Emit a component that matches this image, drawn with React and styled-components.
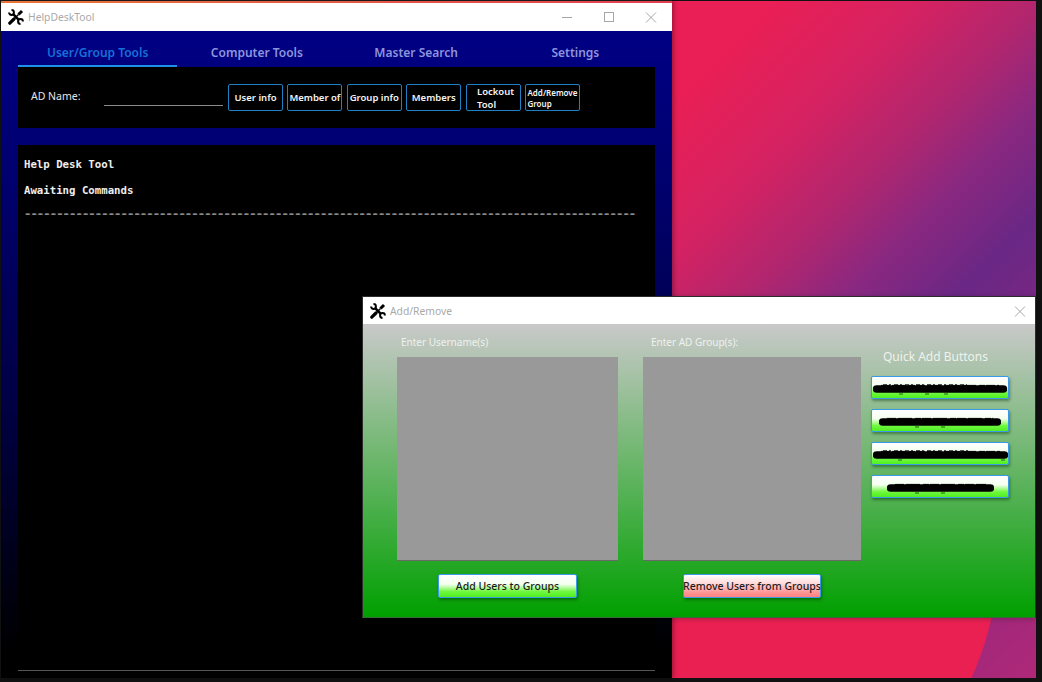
import React from "react";
import styled, { createGlobalStyle } from "styled-components";

const Global = createGlobalStyle`
  html, body { margin: 0; padding: 0; background: #111; overflow: hidden; }
  * { box-sizing: border-box; }
`;
const UI = `"Noto Sans", "Open Sans", sans-serif`;

const Screen = styled.div`
  position: relative;
  width: 1042px;
  height: 682px;
  background: #111;
  overflow: hidden;
  font-family: ${UI};
`;
const Wallpaper = styled.div`
  position: absolute;
  left: 1px; top: 1px;
  width: 1035px;
  height: 677px;
  background:
    radial-gradient(circle 300px at 698px 206px, #ea2052 0 99.5%, rgba(234,32,82,0) 100%) 0 100% / 100% 330px no-repeat,
    linear-gradient(135deg, #ea1f55 0%, #ea1f55 45%, #d52262 54%, #b0266f 61%, #8a2880 66.5%, #6a2785 73%, #b02878 100%);
`;
const Win = styled.div`
  position: absolute;
  display: flex;
  flex-direction: column;
`;
const MainWin = styled(Win)`
  left: 1px; top: 0; width: 671px; height: 678px;
  box-shadow: 2px 0 4px rgba(0,0,0,.3);
`;
const AccentStrip = styled.div`
  height: 3px;
  background: linear-gradient(90deg, #e8743a, #e04050);
  border-top: 1px solid #1a1a1a;
`;
const TitleBar = styled.div`
  display: flex;
  align-items: center;
  height: ${p => p.$h}px;
  background: #fff;
  flex: none;
  padding-left: 7px;
`;
const TitleText = styled.span`
  margin-left: 4px;
  font-size: 10.3px;
  color: #a9a9a9;
`;
const Controls = styled.div`
  margin-left: auto;
  display: flex;
  align-items: center;
`;
const Ctl = styled.svg`
  width: 42px;
  height: 12px;
  display: block;
  stroke: #a6a6a6;
  stroke-width: 1;
  fill: none;
  flex: none;
`;
const Icon = styled.svg`
  width: 16px;
  height: 16px;
  display: block;
  flex: none;
  fill: none;
  stroke: #000;
`;
const MainBody = styled.div`
  flex: 1;
  display: flex;
  flex-direction: column;
  padding: 7px 17px 7px 17px;
  background: linear-gradient(180deg, #000084 0%, #00006c 25%, #000040 60%, #000 96%);
`;
const Tabs = styled.div`
  display: flex;
  height: 29px;
  flex: none;
`;
const Tab = styled.div`
  flex: 1;
  display: flex;
  align-items: center;
  justify-content: center;
  padding-top: 1px;
  font-size: 12px;
  font-weight: 600;
  color: ${p => (p.$active ? "#1670d8" : "#8e94dc")};
  border-bottom: 2px solid ${p => (p.$active ? "#1e90e8" : "transparent")};
`;
const Toolbar = styled.div`
  height: 61px;
  flex: none;
  background: #000;
  display: flex;
  align-items: flex-start;
  padding: 17px 0 0 13px;
`;
const AdLabel = styled.span`
  width: 73px;
  margin-top: 5px;
  font-size: 10.5px;
  color: #e6e6e6;
  flex: none;
`;
const AdInput = styled.div`
  width: 119px;
  height: 22px;
  border-bottom: 1px solid #8a8a8a;
  margin-right: 5px;
  flex: none;
`;
const Tools = styled.div`
  display: flex;
  gap: 4.4px;
`;
const ToolBtn = styled.div`
  width: 55px;
  height: 27px;
  border: 1px solid #2080c4;
  border-radius: 2px;
  display: flex;
  align-items: center;
  justify-content: center;
  color: #f4f4f4;
  font-size: 9.5px;
  font-weight: 600;
  line-height: 13px;
  white-space: nowrap;
`;
const Stack = styled.div`
  display: flex;
  flex-direction: column;
  font-size: ${p => p.$fs || 9.5}px;
  line-height: ${p => p.$lh || 13}px;
`;
const Output = styled.div`
  margin-top: 17px;
  flex: 1;
  background: #000;
  border-bottom: 1px solid #555;
  padding: 13px 6px;
  font-family: "DejaVu Sans Mono", monospace;
  font-weight: 700;
  font-size: 10.7px;
  line-height: 13px;
  color: #eee;
`;
const OutLine = styled.div`
  margin-bottom: 12.5px;
  white-space: pre;
`;
const Dashes = styled(OutLine)`
  margin-top: -2.5px;
  color: #8a8a8a;
  text-shadow: 1px 0 0 #7a7a7a;
`;
const DialogWin = styled(Win)`
  left: 362px; top: 296px; width: 674px; height: 322px;
  border: 1px solid #2c2c2c;
  border-bottom-color: #3a6a3a;
  box-shadow: 0 1px 5px rgba(0,0,0,.25);
`;
const DialogBody = styled.div`
  flex: 1;
  display: flex;
  padding: 9px 0 0 34px;
  background: linear-gradient(180deg, #c9c9c9 0%, #00a000 100%);
`;
const Col = styled.div`
  width: ${p => p.$w}px;
  margin-right: ${p => p.$mr || 0}px;
  display: flex;
  flex-direction: column;
  flex: none;
`;
const FieldLabel = styled.div`
  height: 24px;
  padding-left: ${p => p.$pl || 0}px;
  font-size: 10px;
  line-height: 18px;
  color: #eef2ee;
`;
const Area = styled.div`
  height: 204px;
  background: #999;
  border-bottom: 1px solid #6a6a6a;
`;
const GlossBtn = styled.div`
  width: ${p => p.$w}px;
  height: ${p => p.$h}px;
  flex: none;
  display: flex;
  align-items: center;
  justify-content: center;
  border: 1px solid #3a9ae8;
  border-radius: 2px;
  box-shadow: 1px 2px 3px rgba(0,50,0,.45);
  background: ${p =>
    p.$danger
      ? "linear-gradient(180deg, #fff 0%, #ffd8d8 40%, #ff9494 80%, #ff8080 100%)"
      : "linear-gradient(180deg, #fff 0%, #f4fff0 42%, #70f840 75%, #50f020 100%)"};
  color: #1c1c1c;
  font-size: 10.5px;
  font-weight: 500;
  white-space: nowrap;
`;
const ActionRow = styled.div`
  display: flex;
  justify-content: center;
  margin-top: 13px;
`;
const QuickCol = styled(Col)`
  margin-left: 10px;
`;
const QuickTitle = styled.div`
  height: 43px;
  padding: 15px 0 0 12px;
  font-size: 12px;
  line-height: 18px;
  color: #eef2ee;
  white-space: nowrap;
`;
const QuickList = styled.div`
  display: flex;
  flex-direction: column;
  gap: 10px;
`;
const Scribble = styled.svg`
  display: block;
  height: 14px;
  margin-top: 2px;
  flex: none;
`;

const Redacted = ({ w, ticks = [], tops = false }) => (
  <Scribble width={w} viewBox={`0 0 ${w} 14`}>
    {tops && <path d={`M10 3 H${w - 40}`} stroke="#222" strokeWidth="1.5" strokeDasharray="4 2 2 3" />}
    <path d={`M3.5 7 L${w - 3.5} 7`} stroke="#000" strokeWidth="7.5" strokeLinecap="round" />
    <path d={`M8 3.4 H${w - 8}`} stroke="#000" strokeWidth="1" strokeDasharray="9 2 14 3 6 1" />
    {ticks.map(t => (
      <path key={t} d={`M${t} 12 h4`} stroke="#2a5a20" strokeWidth="1" />
    ))}
  </Scribble>
);

const Wrench = () => (
  <Icon viewBox="0 0 16 16">
    <path d="M1.1 3.5A2.4 2.4 0 1 0 3.5 1.1" strokeWidth="2" />
    <path d="M14.9 12.5A2.4 2.4 0 1 0 12.5 14.9" strokeWidth="2" />
    <path d="M5.2 5.2L10.8 10.8" strokeWidth="2.6" />
    <path d="M1.8 14.2L6 10" strokeWidth="3.2" strokeLinecap="round" />
    <path d="M6 10L10.5 5.5" strokeWidth="1.4" />
    <path d="M10.5 5.5L14 2" strokeWidth="3" />
  </Icon>
);

export default function App() {
  return (
    <Screen>
      <Global />
      <Wallpaper />
      <MainWin>
        <AccentStrip />
        <TitleBar $h={28}>
          <Wrench />
          <TitleText>HelpDeskTool</TitleText>
          <Controls>
            <Ctl viewBox="0 0 42 12"><path d="M16 6.5h10" /></Ctl>
            <Ctl viewBox="0 0 42 12"><rect x="16.5" y="1.5" width="9" height="9" /></Ctl>
            <Ctl viewBox="0 0 42 12"><path d="M16 1.5l10 10M26 1.5l-10 10" /></Ctl>
          </Controls>
        </TitleBar>
        <MainBody>
          <Tabs>
            <Tab $active>User/Group Tools</Tab>
            <Tab>Computer Tools</Tab>
            <Tab>Master Search</Tab>
            <Tab>Settings</Tab>
          </Tabs>
          <Toolbar>
            <AdLabel>AD Name:</AdLabel>
            <AdInput />
            <Tools>
              <ToolBtn>User info</ToolBtn>
              <ToolBtn>Member of</ToolBtn>
              <ToolBtn>Group info</ToolBtn>
              <ToolBtn>Members</ToolBtn>
              <ToolBtn>
                <Stack>
                  <span>&nbsp;&nbsp;Lockout</span>
                  <span>&nbsp;&nbsp;Tool</span>
                </Stack>
              </ToolBtn>
              <ToolBtn>
                <Stack $fs={8} $lh={11}>
                  <span>Add/Remove</span>
                  <span>Group</span>
                </Stack>
              </ToolBtn>
            </Tools>
          </Toolbar>
          <Output>
            <OutLine>Help Desk Tool</OutLine>
            <OutLine>Awaiting Commands</OutLine>
            <Dashes>{"-".repeat(95)}</Dashes>
          </Output>
        </MainBody>
      </MainWin>
      <DialogWin>
        <TitleBar $h={27}>
          <Wrench />
          <TitleText>Add/Remove</TitleText>
          <Controls>
            <Ctl viewBox="0 0 42 12"><path d="M22 1.5l10 10M32 1.5l-10 10" /></Ctl>
          </Controls>
        </TitleBar>
        <DialogBody>
          <Col $w={221} $mr={25}>
            <FieldLabel $pl={4}>Enter Username(s)</FieldLabel>
            <Area />
            <ActionRow>
              <GlossBtn $w={139} $h={24}>Add Users to Groups</GlossBtn>
            </ActionRow>
          </Col>
          <Col $w={218}>
            <FieldLabel $pl={8}>Enter AD Group(s):</FieldLabel>
            <Area />
            <ActionRow>
              <GlossBtn $w={138} $h={24} $danger>Remove Users from Groups</GlossBtn>
            </ActionRow>
          </Col>
          <QuickCol $w={138}>
            <QuickTitle>Quick Add Buttons</QuickTitle>
            <QuickList>
              <GlossBtn $w={138} $h={23}><Redacted w={134} ticks={[26, 52, 71]} tops /></GlossBtn>
              <GlossBtn $w={138} $h={23}><Redacted w={122} ticks={[36, 62]} /></GlossBtn>
              <GlossBtn $w={138} $h={23}><Redacted w={135} ticks={[25, 128]} tops /></GlossBtn>
              <GlossBtn $w={138} $h={23}><Redacted w={107} ticks={[28, 54]} /></GlossBtn>
            </QuickList>
          </QuickCol>
        </DialogBody>
      </DialogWin>
    </Screen>
  );
}
